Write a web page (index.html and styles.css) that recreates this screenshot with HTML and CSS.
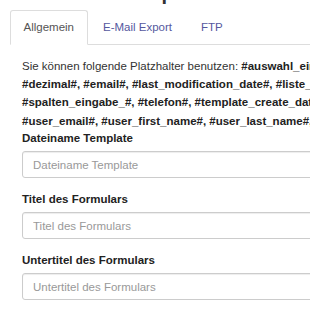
FILE: index.html
```html
<!DOCTYPE html>
<html lang="de">
<head>
    <meta charset="UTF-8">
    <meta name="viewport" content="width=device-width, initial-scale=1.0">
    <title>Export</title>
    <link rel="stylesheet" href="styles.css">
</head>
<body>
    <div class="page">
        <h3 class="page-title">Export</h3>

        <ul class="tabs">
            <li class="tab active">Allgemein</li>
            <li class="tab">E-Mail Export</li>
            <li class="tab">FTP</li>
        </ul>

        <div class="tab-content">
            <p class="hint">Sie können folgende Platzhalter benutzen: <b>#auswahl_eingabe#, #datum#,</b><br>
            <b>#dezimal#, #email#, #last_modification_date#, #liste_eingabe#, #name#,</b><br>
            <b>#spalten_eingabe_#, #telefon#, #template_create_date#, #text#,</b><br>
            <b>#user_email#, #user_first_name#, #user_last_name#, #zahl#</b></p>

            <div class="form-group">
                <label for="fileName">Dateiname Template</label>
                <input type="text" id="fileName" class="form-control" placeholder="Dateiname Template">
            </div>
            <div class="form-group">
                <label for="formTitle">Titel des Formulars</label>
                <input type="text" id="formTitle" class="form-control" placeholder="Titel des Formulars">
            </div>
            <div class="form-group">
                <label for="formSubtitle">Untertitel des Formulars</label>
                <input type="text" id="formSubtitle" class="form-control" placeholder="Untertitel des Formulars">
            </div>
        </div>
    </div>
</body>
</html>
```

FILE: styles.css
```css
body {
    margin: 0;
    font-family: "Liberation Sans", Arial, sans-serif;
    font-size: 11.5px;
    line-height: 16.4px;
    color: #333;
    background-color: #fff;
    overflow: hidden;
}
.page {
    width: 600px;
    padding-left: 10px;
}
.page-title {
    margin: -17px 0 0;
    padding-left: 127px;
    font-size: 20px;
    line-height: 20px;
    font-weight: bold;
}
.tabs {
    display: flex;
    list-style: none;
    margin: 7px 0 0;
    padding: 0;
    border-bottom: 1px solid #ddd;
}
.tab {
    margin-right: 2px;
    margin-bottom: -1px;
    padding: 8.2px 12.5px;
    border: 1px solid transparent;
    border-radius: 3px 3px 0 0;
    color: #55589e;
}
.tab.active {
    color: #555;
    background-color: #fff;
    border-color: #ddd;
    border-bottom-color: transparent;
}
.tab-content {
    padding: 12px 0 0 12px;
}
.hint {
    margin: 0;
    line-height: 18.3px;
}
.hint b {
    color: #222;
}
.form-group {
    margin-bottom: 12.5px;
}
.form-group label {
    display: block;
    margin-bottom: 5px;
    font-weight: bold;
    color: #222;
}
.form-control {
    display: block;
    box-sizing: border-box;
    width: 560px;
    height: 27px;
    padding: 0 10px;
    border: 1px solid #ccc;
    border-radius: 3px;
    box-shadow: inset 0 1px 1px rgba(0, 0, 0, .075);
    font: inherit;
    color: #555;
}
.form-control::placeholder {
    color: #999;
}
```
